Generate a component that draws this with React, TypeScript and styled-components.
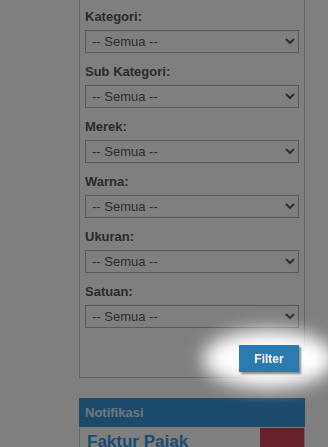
import React from 'react';
import styled, {createGlobalStyle} from 'styled-components';

const GlobalStyle = createGlobalStyle`
  html, body {
    margin: 0;
    padding: 0;
    background: #fff;
    font-family: "Liberation Sans", Arial, sans-serif;
    overflow: hidden;
  }
`

const filters = ['Kategori', 'Sub Kategori', 'Merek', 'Warna', 'Ukuran', 'Satuan'];

export default function App() {
    return (
        <>
            <GlobalStyle/>
            <Sidebar>
                <FilterPanel>
                    {filters.map(name => (
                        <Field key={name}>
                            <Label>{name}:</Label>
                            <Select defaultValue="">
                                <option value="">-- Semua --</option>
                            </Select>
                        </Field>
                    ))}
                    <Actions>
                        <Spotlight>
                            <FilterButton>Filter</FilterButton>
                        </Spotlight>
                    </Actions>
                </FilterPanel>

                <Box>
                    <BoxHeader>Notifikasi</BoxHeader>
                    <NotifRow>
                        <NotifTitle>Faktur Pajak</NotifTitle>
                        <Badge/>
                    </NotifRow>
                </Box>
            </Sidebar>
            <Overlay/>
        </>
    );
}

const Sidebar = styled.div`
  margin-left: 79px;
  width: 226px;
`
const FilterPanel = styled.div`
  border: 1px solid #c4c4c4;
  border-top: 0;
  padding: 9px 5px 5px;
`
const Field = styled.div`
  display: flex;
  flex-direction: column;
  margin-bottom: 11px;
`
const Label = styled.label`
  font-size: 13px;
  line-height: 15px;
  font-weight: 700;
  color: #565656;
  margin-bottom: 6px;
`
const Select = styled.select`
  width: 100%;
  height: 23px;
  border: 1px solid #b0b0b0;
  border-radius: 0;
  background: #fff;
  color: #5a5a5a;
  font-family: "Liberation Sans", Arial, sans-serif;
  font-size: 13px;
  padding: 0 2px;
`
const Actions = styled.div`
  display: flex;
  justify-content: flex-end;
  padding-top: 6px;
`
const Spotlight = styled.div`
  position: relative;
  z-index: 20;

  &::before {
    content: '';
    position: absolute;
    top: -15px;
    bottom: -16px;
    left: -36px;
    right: -36px;
    border-radius: 50%;
    background: #fff;
    filter: blur(9px);
    z-index: -1;
  }
`
const FilterButton = styled.button`
  display: block;
  width: 60px;
  height: 27px;
  border: 0;
  border-radius: 0;
  background: #2b7bb0;
  color: #fff;
  font-family: "Liberation Sans", Arial, sans-serif;
  font-size: 12px;
  font-weight: 700;
  box-shadow: 2px 2px 2px rgba(0, 0, 0, 0.45);
  cursor: pointer;
`
const Box = styled.div`
  margin-top: 20px;
`
const BoxHeader = styled.div`
  height: 29px;
  line-height: 29px;
  padding-left: 6px;
  background: #3894d4;
  color: #d8f0ff;
  font-size: 13px;
  font-weight: 700;
`
const NotifRow = styled.div`
  display: flex;
  justify-content: space-between;
  border: 1px solid #c4c4c4;
  border-top: 0;
  height: 60px;
  margin-top: 1px;
`
const NotifTitle = styled.div`
  padding: 4px 0 0 7px;
  color: #2f9ae6;
  font-size: 17px;
  font-weight: 700;
`
const Badge = styled.div`
  width: 44px;
  background: #cc4455;
`
const Overlay = styled.div`
  position: fixed;
  inset: 0;
  background: rgba(0, 0, 0, 0.5);
  z-index: 10;
`
